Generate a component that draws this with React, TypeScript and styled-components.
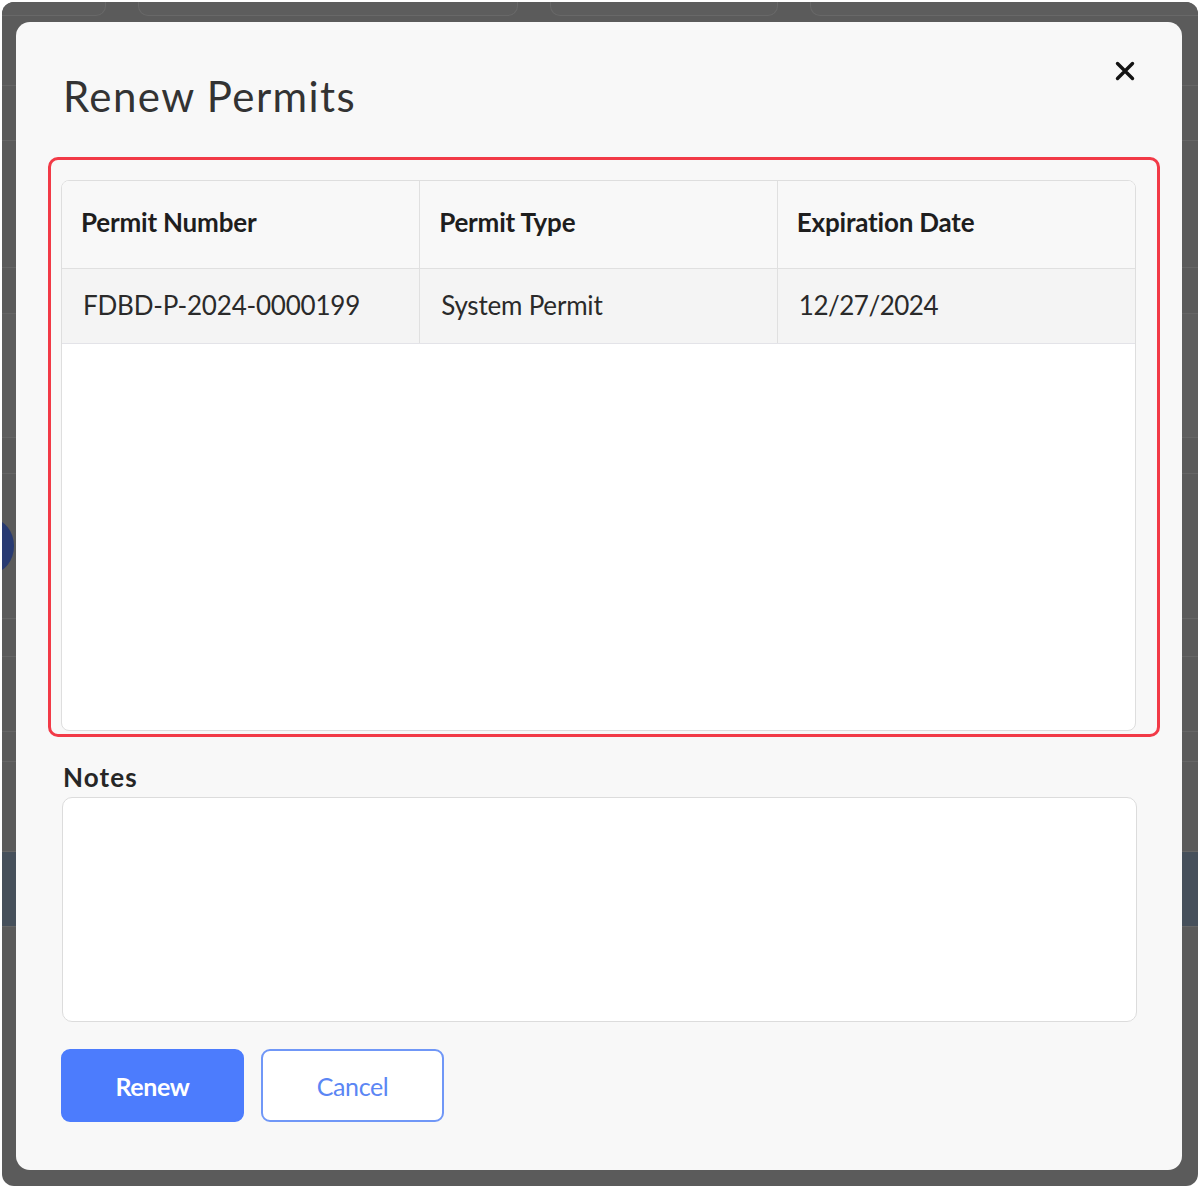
import React from 'react';
import styled, { createGlobalStyle } from 'styled-components';

const GlobalStyle = createGlobalStyle`
  html, body {
    margin: 0;
    padding: 0;
    background: #ffffff;
  }
  body {
    font-family: Lato, "Open Sans", "Liberation Sans", sans-serif;
    -webkit-font-smoothing: antialiased;
  }
  * {
    box-sizing: border-box;
  }
`;

// Dimmed page behind the dialog
const Frame = styled.div`
  position: relative;
  margin: 2px;
  height: 1184px;
  border-radius: 12px;
  background: #5b5b5b;
  overflow: hidden;
`;

const BackPage = styled.div`
  display: flex;
  flex-direction: column;
  height: 100%;
`;

const TabStrip = styled.div`
  display: grid;
  grid-template-columns: 118px 380px 228px 1fr;
  gap: 32px;
  height: 18px;
  margin: -4px -14px 0 -14px;
`;

const Tab = styled.div`
  border: 1px solid #686868;
  border-top: none;
  border-radius: 0 0 10px 10px;
  background: #5d5d5d;
`;

const BackRow = styled.div<{ $h: number; $tone?: string }>`
  height: ${p => p.$h}px;
  border-bottom: 1px solid #666666;
  background: ${p => p.$tone || 'transparent'};
  display: flex;
  align-items: center;
  justify-content: space-between;
`;

const BackDot = styled.div`
  width: 44px;
  height: 54px;
  margin-left: -32px;
  border-radius: 50%;
  background: #283a72;
`;

const Overlay = styled.div`
  position: absolute;
  inset: 0;
  padding: 20px 16px 0 14px;
`;

// Dialog
const Modal = styled.div`
  height: 1148px;
  background: #f8f8f8;
  border-radius: 14px;
  padding: 0 45px 48px 45px;
  display: flex;
  flex-direction: column;
`;

const ModalHeader = styled.div`
  display: flex;
  justify-content: space-between;
  align-items: flex-start;
  height: 135px;
  padding-top: 48px;
`;

const Title = styled.h2`
  margin: 0 0 0 2px;
  font-size: 42px;
  line-height: 52px;
  font-weight: 400;
  color: #333333;
  letter-spacing: 1.4px;
`;

const CloseButton = styled.button`
  border: none;
  background: none;
  padding: 0;
  margin: -13px -2px 0 0;
  width: 28px;
  height: 28px;
  display: flex;
  align-items: center;
  justify-content: center;
  cursor: pointer;
`;

const Highlight = styled.div`
  margin: 0 -23px 0 -13px;
  padding: 20px 20px 3px 10px;
  border: 3px solid #f23a47;
  border-radius: 10px;
`;

const TableWrap = styled.div`
  height: 551px;
  margin-right: 1px;
  border: 1px solid #dedede;
  border-radius: 8px;
  background: #ffffff;
  overflow: hidden;
`;

const Table = styled.table`
  width: 100%;
  border-collapse: collapse;
  table-layout: fixed;
`;

const HeadCell = styled.th`
  height: 87px;
  padding: 0 0 4px 19px;
  text-align: left;
  font-size: 26px;
  font-weight: 700;
  color: #1e1e1e;
  letter-spacing: -0.2px;
  background: #f8f8f8;
  border-bottom: 1px solid #e0e0e0;
  border-right: 1px solid #e0e0e0;
  &:last-child {
    border-right: none;
  }
`;

const BodyCell = styled.td`
  height: 75px;
  padding: 0 0 2px 21px;
  font-size: 26px;
  font-weight: 400;
  color: #2a2a2a;
  letter-spacing: -0.2px;
  background: #f4f4f4;
  border-bottom: 1px solid #e3e3e8;
  border-right: 1px solid #e0e0e0;
  &:last-child {
    border-right: none;
    letter-spacing: -0.5px;
  }
`;

const NotesLabel = styled.label`
  display: block;
  margin: 21px 0 0 2px;
  font-size: 26px;
  line-height: 39px;
  font-weight: 700;
  color: #262626;
  letter-spacing: 1.1px;
`;

const NotesArea = styled.textarea`
  display: block;
  width: calc(100% - 1px);
  height: 225px;
  margin: 0 0 0 1px;
  border: 1px solid #dcdcdc;
  border-radius: 10px;
  background: #ffffff;
  resize: none;
  outline: none;
  font-family: inherit;
  font-size: 22px;
  padding: 12px 16px;
`;

const Actions = styled.div`
  display: flex;
  gap: 17px;
  margin-top: 27px;
`;

const Button = styled.button<{ $primary?: boolean }>`
  width: 183px;
  height: 73px;
  border-radius: 9px;
  font-family: inherit;
  font-size: 25px;
  letter-spacing: -0.4px;
  cursor: pointer;
  border: 2px solid ${p => (p.$primary ? '#4c7cfd' : '#7097f7')};
  background: ${p => (p.$primary ? '#4c7cfd' : '#ffffff')};
  color: ${p => (p.$primary ? '#ffffff' : '#5b86f4')};
  font-weight: ${p => (p.$primary ? 700 : 400)};
`;

const columns = ['Permit Number', 'Permit Type', 'Expiration Date'];
const permits = [
  { number: 'FDBD-P-2024-0000199', type: 'System Permit', expires: '12/27/2024' },
];

const App: React.FC = () => {
  return (
    <>
      <GlobalStyle />
      <Frame>
        <BackPage>
          <TabStrip>
            <Tab />
            <Tab />
            <Tab />
            <Tab />
          </TabStrip>
          <BackRow $h={70} />
          <BackRow $h={55} />
          <BackRow $h={127} />
          <BackRow $h={46} />
          <BackRow $h={124} $tone="#5e5e5e" />
          <BackRow $h={36} />
          <BackRow $h={145}>
            <BackDot />
          </BackRow>
          <BackRow $h={38} />
          <BackRow $h={75} />
          <BackRow $h={30} />
          <BackRow $h={90} />
          <BackRow $h={75} $tone="#46505b" />
        </BackPage>

        <Overlay>
          <Modal role="dialog" aria-labelledby="renew-title">
            <ModalHeader>
              <Title id="renew-title">Renew Permits</Title>
              <CloseButton aria-label="Close">
                <svg width="20" height="20" viewBox="0 0 20 20">
                  <path d="M2.5 2.5 L17.5 17.5 M17.5 2.5 L2.5 17.5" stroke="#141414" strokeWidth="3.4" strokeLinecap="round" />
                </svg>
              </CloseButton>
            </ModalHeader>

            <Highlight>
              <TableWrap>
                <Table>
                  <thead>
                    <tr>
                      {columns.map(c => (
                        <HeadCell key={c}>{c}</HeadCell>
                      ))}
                    </tr>
                  </thead>
                  <tbody>
                    {permits.map(p => (
                      <tr key={p.number}>
                        <BodyCell>{p.number}</BodyCell>
                        <BodyCell>{p.type}</BodyCell>
                        <BodyCell>{p.expires}</BodyCell>
                      </tr>
                    ))}
                  </tbody>
                </Table>
              </TableWrap>
            </Highlight>

            <NotesLabel htmlFor="renew-notes">Notes</NotesLabel>
            <NotesArea id="renew-notes" />

            <Actions>
              <Button $primary>Renew</Button>
              <Button>Cancel</Button>
            </Actions>
          </Modal>
        </Overlay>
      </Frame>
    </>
  );
};

export default App;
